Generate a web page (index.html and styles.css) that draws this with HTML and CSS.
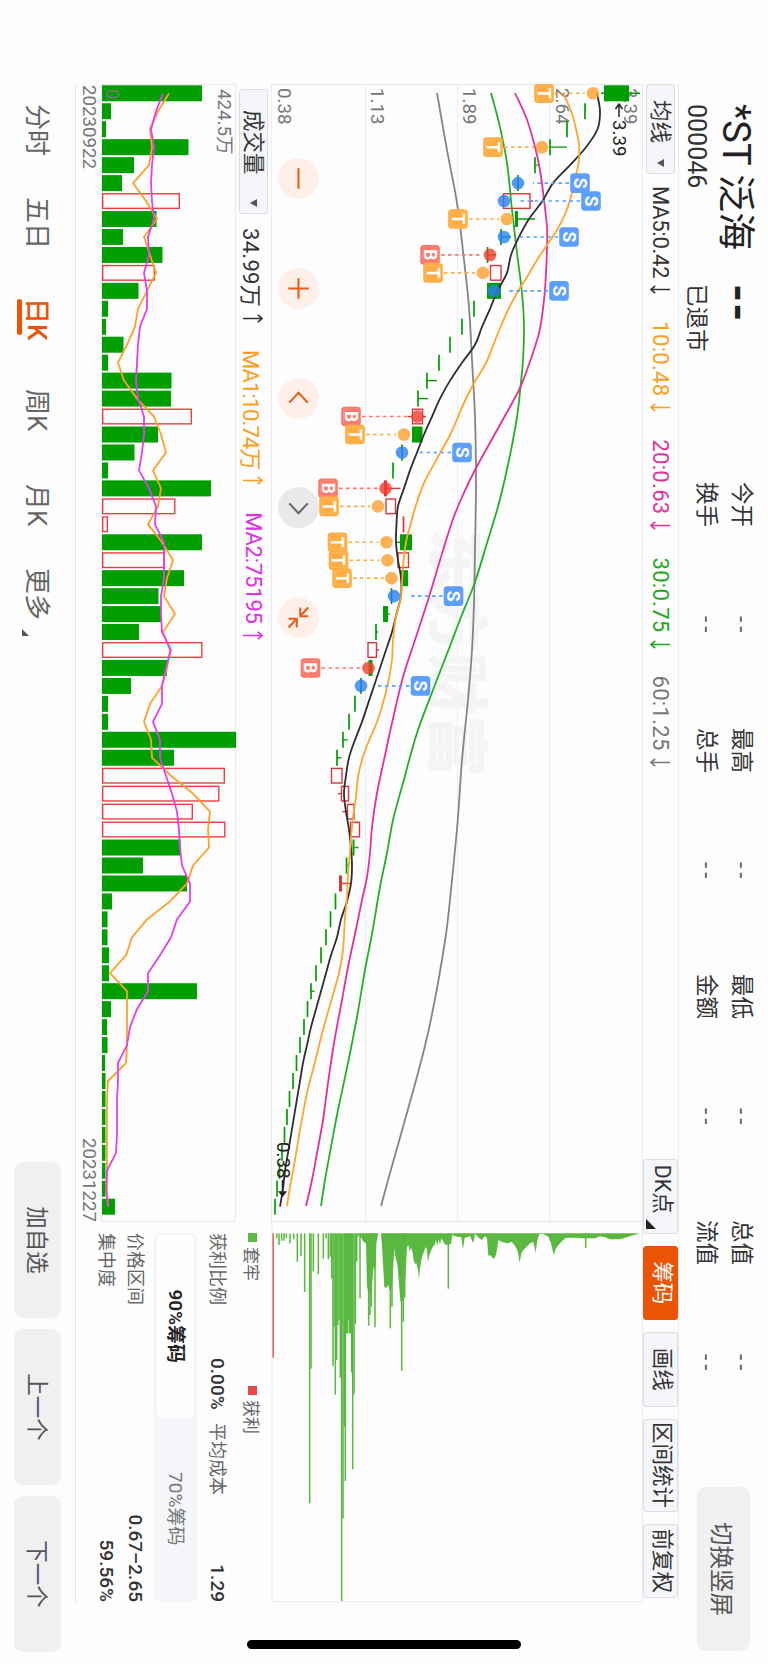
FILE: index.html
```html
<!DOCTYPE html>
<html lang="zh-CN">
<head>
  <meta charset="UTF-8">
  <meta name="viewport" content="width=device-width, initial-scale=1.0">
  <title>*ST泛海 000046</title>
  <link rel="stylesheet" href="styles.css">
</head>
<body>
  <svg class="defs" width="0" height="0">
    <symbol id="down" viewBox="0 0 9 20"><path d="M4.5 0V19M.8 14.8L4.5 19L8.2 14.8" fill="none" stroke="currentColor" stroke-width="1.6"/></symbol>
    <symbol id="up" viewBox="0 0 9 20"><path d="M4.5 20V1M.8 5.2L4.5 1L8.2 5.2" fill="none" stroke="currentColor" stroke-width="1.6"/></symbol>
  </svg>

  <div class="device">
  <div class="screen">
    <header class="header">
      <div class="stock">
        <div class="stock-name">*ST 泛海</div>
        <div class="stock-code">000046</div>
      </div>
      <div class="price">
        <div class="price-now">--</div>
        <div class="price-state">已退市</div>
      </div>
      <div class="quotes">
        <span>今开</span><i>--</i><span>最高</span><i>--</i><span>最低</span><i>--</i><span>总值</span><i>--</i>
        <span>换手</span><i>--</i><span>总手</span><i>--</i><span>金额</span><i>--</i><span>流值</span><i>--</i>
      </div>
      <button class="btn rotate-btn">切换竖屏</button>
    </header>

    <main class="main">
      <div class="toolbar">
        <button class="select">均线<b class="caret"></b></button>
        <div class="legend">
          <span class="black">MA5:0.42<svg class="arrow"><use href="#down"/></svg></span>
          <span class="orange">10:0.48<svg class="arrow"><use href="#down"/></svg></span>
          <span class="pink">20:0.63<svg class="arrow"><use href="#down"/></svg></span>
          <span class="green">30:0.75<svg class="arrow"><use href="#down"/></svg></span>
          <span class="gray">60:1.25<svg class="arrow"><use href="#down"/></svg></span>
        </div>
        <div class="tools">
          <button class="tool dk">DK点<b class="corner"></b></button>
          <button class="tool active">筹码</button>
          <button class="tool">画线</button>
          <button class="tool wide">区间统计</button>
          <button class="tool">前复权</button>
        </div>
      </div>

      <div class="charts">
        <div class="kline">
          <svg id="kline" width="1138" height="372" viewBox="0 0 1138 372"></svg>
          <div class="controls">
            <button class="round"><svg viewBox="-20 -20 40 40"><path d="M-10 0H10"/></svg></button>
            <button class="round"><svg viewBox="-20 -20 40 40"><path d="M-10 0H10M0 -10V10"/></svg></button>
            <button class="round"><svg viewBox="-20 -20 40 40"><path d="M4 -9L-5.5 0L4 9"/></svg></button>
            <button class="round off"><svg viewBox="-20 -20 40 40"><path d="M-4 -9L5.5 0L-4 9"/></svg></button>
            <button class="round"><svg viewBox="-20 -20 40 40"><path d="M-9.7 -1.7H-1.3V-9.5M-9.7 -9.5L-1.3 -1.7M9.7 1.7H1.3V9.7M9.7 9.7L1.3 1.7"/></svg></button>
          </div>
        </div>
        <svg id="chips" width="380" height="372" viewBox="0 0 1140 1116"></svg>
      </div>

      <div class="lower">
        <section class="volume">
          <div class="toolbar volume-bar">
            <button class="select volume-select">成交量<b class="caret"></b></button>
            <div class="legend">
              <span class="black">34.99万<svg class="arrow"><use href="#up"/></svg></span>
              <span class="orange">MA1:10.74万<svg class="arrow"><use href="#up"/></svg></span>
              <span class="magenta">MA2:75195<svg class="arrow"><use href="#up"/></svg></span>
            </div>
          </div>
          <svg id="volume" width="1138" height="135" viewBox="0 0 1138 135"></svg>
          <div class="dates"><span>20230922</span><span>20231227</span></div>
        </section>

        <section class="chip-info">
          <div class="chip-legend">
            <span><b class="dot-green"></b>套牢</span>
            <span><b class="dot-red"></b>获利</span>
          </div>
          <div class="info-row split">
            <span>获利比例</span><strong>0.00%</strong><span>平均成本</span><strong>1.29</strong>
          </div>
          <div class="segment">
            <button class="seg on">90%筹码</button>
            <button class="seg">70%筹码</button>
          </div>
          <div class="info-row"><span>价格区间</span><strong>0.67–2.65</strong></div>
          <div class="info-row"><span>集中度</span><strong>59.56%</strong></div>
        </section>
      </div>
    </main>

    <footer class="footer">
      <nav class="tabs">
        <a>分时</a>
        <a>五日</a>
        <a class="current">日K</a>
        <a>周K</a>
        <a>月K</a>
        <a>更多<b class="corner small"></b></a>
      </nav>
      <div class="actions">
        <button class="btn">加自选</button>
        <button class="btn">上一个</button>
        <button class="btn">下一个</button>
      </div>
    </footer>

    <div class="home-bar"></div>
  </div>
  </div>

  <script src="charts.js"></script>
</body>
</html>
```

FILE: styles.css
```css
* {
  box-sizing: border-box;
}

body {
  margin: 0;
  background: #fdfdfe;
  font-family: Roboto, "Noto Sans CJK SC", sans-serif;
  color: #333;
}

button {
  border: none;
  padding: 0;
  margin: 0;
  font-family: inherit;
  color: inherit;
  white-space: nowrap;
}

.defs {
  display: block;
}

.device {
  width: 768px;
  height: 1664px;
  overflow: hidden;
}

/* landscape screen on a portrait device */
.screen {
  position: relative;
  width: 1664px;
  height: 768px;
  display: flex;
  flex-direction: column;
  transform-origin: 0 0;
  transform: translateX(768px) rotate(90deg);
}

.header {
  height: 89px;
  display: flex;
  align-items: flex-start;
  padding-left: 104px;
}

.stock {
  width: 180px;
}

.stock-name {
  height: 53px;
  line-height: 65px;
  font-size: 38px;
  white-space: nowrap;
  color: #222;
}

.stock-code {
  height: 36px;
  line-height: 38px;
  font-size: 25px;
}

.price {
  width: 198px;
}

.price-now {
  height: 53px;
  line-height: 58px;
  font-size: 46px;
  font-weight: 700;
  letter-spacing: 1px;
  color: #222;
}

.price-state {
  height: 36px;
  line-height: 36px;
  font-size: 22.5px;
}

.quotes {
  display: grid;
  grid-template-columns: repeat(4, 134px 112px);
  grid-template-rows: 35px 35px;
  padding-top: 9px;
  font-size: 22.5px;
  line-height: 35px;
}

.quotes i {
  font-style: normal;
  letter-spacing: 4px;
  color: #555;
}

.btn {
  width: 156px;
  height: 47px;
  padding-bottom: 4px;
  border-radius: 9px;
  background: #f0f0f3;
  font-size: 22.5px;
  color: #555;
}

.btn,
.tool,
.seg,
.select {
  padding-top: 0;
}

.rotate-btn {
  width: 164px;
  height: 53px;
  margin-top: 18px;
  margin-left: 21px;
  padding-bottom: 0;
  font-size: 23.5px;
}

.main {
  width: 1518px;
  height: 604px;
  margin-left: 84px;
  border-top: 1px solid #ebebf0;
  border-bottom: 1px solid #e4e4ea;
}

.toolbar {
  height: 35px;
  display: flex;
  align-items: center;
}

.select {
  width: 90px;
  height: 29px;
  padding: 0 6px 0 15px;
  display: flex;
  align-items: center;
  justify-content: space-between;
  border: 1px solid #dcdce2;
  border-radius: 3px;
  background: #f5f6f9;
  font-size: 21.5px;
  line-height: 24px;
}

.caret {
  border-left: 4px solid transparent;
  border-right: 4px solid transparent;
  border-top: 7px solid #555;
}

.legend {
  display: flex;
  gap: 27px;
  margin-left: 12px;
  font-size: 22px;
  letter-spacing: 0.3px;
}

.legend span {
  display: flex;
  align-items: center;
  gap: 7px;
}

.legend .black {
  letter-spacing: -0.25px;
}

.volume-bar .black {
  letter-spacing: 0.3px;
}

.volume-bar .orange {
  letter-spacing: -0.95px;
}

.volume-bar .magenta {
  letter-spacing: -0.2px;
}

.arrow {
  width: 9px;
  height: 20px;
}

.black { color: #333; }
.orange { color: #fd9d20; }
.pink { color: #e3319c; }
.green { color: #21a821; }
.gray { color: #777; }
.magenta { color: #dc32e4; }

.tools {
  display: flex;
  gap: 12px;
  margin-left: auto;
  margin-right: 4px;
}

.tool {
  position: relative;
  width: 74.5px;
  height: 35px;
  padding-bottom: 4px;
  border: 1px solid #dcdce2;
  border-radius: 3px;
  background: #f5f6f9;
  font-size: 21.5px;
  line-height: 24px;
}

.tool.wide {
  width: 93px;
}

.tool.dk {
  padding-right: 14px;
}

.tool.active {
  background: #ea5404;
  border-color: #ea5404;
  color: #fff;
}

.corner {
  position: absolute;
  right: 4px;
  bottom: 2px;
  border-left: 10px solid transparent;
  border-bottom: 10px solid #222;
}

.corner.small {
  right: -16px;
  bottom: 9px;
  border-left-width: 7px;
  border-bottom: 7px solid #555;
}

.charts {
  display: flex;
  height: 372px;
}

.charts svg {
  display: block;
}

.kline {
  position: relative;
  width: 1138px;
}

.controls {
  position: absolute;
  left: 74px;
  bottom: 7px;
  display: flex;
  gap: 68.8px;
}

.round {
  width: 41px;
  height: 41px;
  border-radius: 50%;
  background: #fef0e9;
}

.round svg {
  width: 41px;
  height: 41px;
  fill: none;
  stroke: #ea5b14;
  stroke-width: 2;
}

.round.off {
  background: #e9e9e9;
}

.round.off svg {
  stroke: #666;
}

.lower {
  display: flex;
}

.volume {
  width: 1138px;
}

.volume svg {
  display: block;
}

.volume-bar {
  padding-left: 5px;
}

.volume-select {
  width: 125px;
  padding-left: 20px;
}

.volume-bar .legend {
  margin-left: 14px;
}

.dates {
  display: flex;
  justify-content: space-between;
  height: 25px;
  line-height: 24px;
  padding-left: 1px;
  font-size: 18.7px;
  color: #777;
}

.chip-info {
  width: 369px;
  margin-left: 11px;
  padding-top: 6px;
  font-size: 18px;
}

.chip-legend {
  display: grid;
  grid-template-columns: 153px 1fr;
  height: 25px;
  font-size: 17px;
  color: #666;
}

.chip-legend span {
  display: flex;
  align-items: center;
  gap: 5px;
}

.chip-legend b {
  width: 9px;
  height: 9px;
}

.dot-green { background: #5cb840; }
.dot-red { background: #e84a4a; }

.info-row {
  display: flex;
  justify-content: space-between;
  height: 28.5px;
  line-height: 28px;
  color: #666;
}

.info-row strong {
  font-weight: 500;
  font-size: 19px;
  color: #333;
}

.info-row.split {
  display: grid;
  grid-template-columns: 125px 65px 1fr auto;
  height: 43px;
  line-height: 46px;
}

.segment {
  display: flex;
  height: 43px;
  margin-bottom: 5px;
  padding: 3px 2px;
  border-radius: 6px;
  background: #f5f6f9;
}

.seg {
  flex: 1;
  padding-bottom: 4px;
  border-radius: 5px;
  background: none;
  font-size: 19px;
  color: #777;
}

.seg.on {
  background: #fefefe;
  font-weight: 600;
  color: #222;
}

.footer {
  height: 75px;
  display: flex;
  align-items: flex-start;
  padding-left: 104px;
}

.tabs {
  display: grid;
  grid-template-columns: 93px 101px 91px 95px 84px 90px;
  margin-top: 14px;
  font-size: 26px;
  line-height: 48px;
  color: #666;
}

.tabs a {
  position: relative;
  justify-self: start;
  height: 48px;
}

.tabs .current {
  color: #ea5404;
  font-weight: 500;
}

.tabs .current::after {
  content: "";
  position: absolute;
  left: 1px;
  bottom: 4px;
  width: 36px;
  height: 5px;
  border-radius: 3px;
  background: #ea5404;
}

.actions {
  display: flex;
  gap: 11px;
  margin-top: 14px;
  margin-left: 504px;
}

.home-bar {
  position: absolute;
  left: 1640px;
  top: 247px;
  width: 9px;
  height: 274px;
  border-radius: 5px;
  background: #000;
}
```

FILE: charts.js
```js
const STEP = 17.958;
const FIRST = 9.3;
const UP = "#d9363c";
const DOWN = "#009e00";

const cx = i => FIRST + i * STEP;
const line = (x1, y1, x2, y2, c, w = 1) =>
  `<line x1="${x1}" y1="${y1}" x2="${x2}" y2="${y2}" stroke="${c}" stroke-width="${w}"/>`;
const rect = (x, y, w, h, c) => `<rect x="${x}" y="${y}" width="${w}" height="${h}" fill="${c}"/>`;
const hollow = (x, y, w, h, c) =>
  `<rect x="${x}" y="${y}" width="${w}" height="${h}" fill="none" stroke="${c}" stroke-width="1.4"/>`;
const text = (x, y, s, size, c, extra = "") =>
  `<text x="${x}" y="${y}" font-size="${size}" fill="${c}" ${extra}>${s}</text>`;

// smooth curve through the points
function curve(p, color) {
  let d = `M${p[0]}`;
  for (let i = 0; i < p.length - 1; i++) {
    const a = p[i - 1] || p[i], b = p[i], c = p[i + 1], e = p[i + 2] || c;
    d += `C${b[0] + (c[0] - a[0]) / 6},${b[1] + (c[1] - a[1]) / 6} ${c[0] - (e[0] - b[0]) / 6},${c[1] - (e[1] - b[1]) / 6} ${c}`;
  }
  return `<path d="${d}" fill="none" stroke="${color}" stroke-width="1.8"/>`;
}

// [high, body top, body bottom, low, type]  g: down, r: up hollow, f: up filled
const candles = [
  [3, 14, 39, 42, "g"], [58, 58, 58, 58, "g"], [76, 76, 76, 76, "g"], [76, 93, 93, 93, "g"],
  [105, 108, 108, 108, "g"], [125, 125, 125, 125, "g"], [110, 113, 139.5, 139.5, "r"], [108, 125, 128, 128, "g"],
  [132, 142, 142, 142, "g"], [147, 155.5, 155.5, 155.5, "g"], [142, 142, 152.5, 152.5, "r"], [142, 142, 156, 156, "g"],
  [169, 169, 169, 169, "g"], [181, 181, 181, 181, "g"], [193, 193, 193, 193, "g"], [204, 204, 204, 204, "g"],
  [206, 216, 216, 216, "g"], [215, 225, 225, 225, "g"], [217, 220.5, 230.5, 235, "r"], [220.5, 220.5, 231, 231, "g"],
  [241, 241, 241, 241, "g"], [250, 250, 250, 250, "g"], [242.5, 256, 259, 259, "f"], [247.5, 247.5, 257, 257, "r"],
  [239.5, 239.5, 239.5, 239.5, "f"], [231, 231, 243, 247, "g"], [234.5, 234.5, 245, 245, "r"], [235, 235, 242, 242, "g"],
  [251.5, 251.5, 251.5, 251.5, "g"], [253, 255, 260, 260, "g"], [265, 267, 267, 267, "g"], [264, 266.5, 275, 275, "r"],
  [270.5, 270.5, 274.5, 274.5, "g"], [282, 282, 282, 282, "g"], [288, 288, 288, 288, "g"], [294, 294, 294, 294, "g"],
  [295.5, 300, 300, 300, "g"], [301.5, 306, 306, 306, "g"], [301, 301, 311.5, 311.5, "r"], [294.5, 294.5, 301.5, 305, "r"],
  [289, 289, 295.5, 300.5, "r"], [283.5, 283.5, 292.5, 292.5, "r"], [284.5, 288.5, 290.5, 290.5, "g"], [294, 296.5, 296.5, 296.5, "g"],
  [293, 301, 304, 304, "f"], [307.5, 307.5, 307.5, 307.5, "g"], [312.5, 312.5, 312.5, 312.5, "g"], [317, 317, 317, 317, "g"],
  [322, 322, 322, 322, "g"], [327, 327, 327, 327, "g"], [328.5, 332, 332, 332, "g"], [335.5, 335.5, 335.5, 335.5, "g"],
  [339, 339, 339, 339, "g"], [343, 343, 343, 343, "g"], [346.5, 346.5, 346.5, 346.5, "g"], [350, 350, 350, 350, "g"],
  [353.5, 353.5, 353.5, 353.5, "g"], [356, 356, 356, 356, "g"], [358.5, 358.5, 358.5, 358.5, "g"], [361, 361, 361, 361, "g"],
  [363.5, 363.5, 363.5, 363.5, "g"], [366, 366, 366, 366, "g"], [368, 368, 368, 368, "g"]
];

const ma5 = [46, 43, 45.5, 57, 73, 90, 100.5, 114, 124, 132, 136, 145.5, 153, 161, 168, 181, 193, 203, 211, 219, 226,
  233, 239, 245, 246.5, 247, 245, 242, 242, 246.5, 251, 257, 263, 269, 275, 281, 288, 294, 297, 299, 297, 294, 292,
  291, 292, 296, 302, 306, 312, 317, 322, 327, 332, 336, 340, 343, 346, 349, 352, 355, 358, 360, 363];

const ma10 = [[9, 80], [27, 72], [45, 67], [61, 64], [76, 64], [91, 67], [109, 71], [128, 77], [146, 86], [161, 96],
  [176, 106], [193, 116], [209, 126], [226, 135], [249, 145], [279, 157], [299, 169], [319, 179], [349, 192],
  [371, 204], [399, 219], [421, 227], [439, 232], [458, 237], [483, 240], [513, 242], [533, 247], [556, 250],
  [576, 251], [599, 255], [619, 260], [638, 266], [659, 275], [676, 281], [693, 285], [713, 287], [733, 290],
  [753, 292], [769, 293], [789, 295], [813, 296], [833, 298], [866, 300], [889, 304], [914, 311], [946, 320],
  [978, 328], [1009, 336], [1046, 343], [1076, 348], [1103, 353], [1122, 356]];

const ma20 = [[9, 128], [33, 117], [59, 109], [86, 103], [116, 99], [143, 96], [163, 96], [189, 97], [216, 99],
  [249, 104], [286, 116], [306, 124], [339, 142], [384, 167], [413, 181], [438, 191], [473, 202], [513, 214],
  [556, 228], [593, 240], [639, 251], [676, 259], [709, 266], [743, 271], [769, 273], [793, 276], [816, 281],
  [850, 288], [883, 295], [916, 301], [959, 309], [999, 315], [1036, 320], [1069, 326], [1096, 331], [1122, 337]];

const ma30 = [[9, 152], [39, 144], [79, 136], [126, 131], [169, 126], [209, 121], [243, 119], [276, 120], [298, 122],
  [333, 126], [376, 134], [419, 144], [459, 156], [498, 168], [533, 182], [562, 193], [606, 210], [649, 226],
  [699, 240], [736, 250], [769, 256], [803, 263], [850, 271], [886, 278], [933, 286], [979, 295], [1026, 305],
  [1063, 312], [1096, 318], [1122, 322]];

const ma60 = [[9, 206], [66, 196], [119, 186], [176, 179], [223, 174], [276, 171], [333, 168], [399, 167], [466, 168],
  [519, 169], [566, 171], [616, 175], [676, 181], [733, 185], [776, 189], [816, 193], [850, 197], [899, 205],
  [949, 215], [989, 225], [1043, 240], [1089, 253], [1122, 262]];

// [candle index, badge y, dot y, letter]
const marks = [
  [0, 99, 50, "T"], [3, 150, 101, "T"], [5, 63, 125, "S"], [6, 52, 139, "S"], [7, 185, 136, "T"], [8, 74, 139, "S"],
  [9, 213, 153, "B"], [10, 210, 160, "T"], [11, 84, 149, "S"], [18, 292, 225.5, "B"], [19, 288, 239, "T"],
  [20, 181, 241, "S"], [22, 315, 257.5, "B"], [23, 314, 265, "T"], [25, 305.5, 256.5, "T"], [26, 304.5, 255.5, "T"],
  [27, 301, 251.5, "T"], [28, 189.5, 249, "S"], [32, 332.5, 274.5, "B"], [33, 222.5, 282, "S"]
];
const markColor = { T: "#ffad42", S: "#5c9fff", B: "#ff7769" };
const dotColor = { T: "#ff9f2a", S: "#2a7ff5", B: "#f43d30" };

function drawKline() {
  let s = "";
  for (const y of [0.5, 93.5, 185.5, 277.5, 371.5]) s += line(0, y, 1138, y, "#ececf4");
  s += line(0.5, 0, 0.5, 372, "#e6e6ee") + line(1137.5, 0, 1137.5, 372, "#e6e6ee");
  s += text(445, 209, "东方财富", 62, "#f4f4f6", 'font-weight="900"');

  [["3.39", 13], ["2.64", 81], ["1.89", 173.5], ["1.13", 266], ["0.38", 359]].forEach(([t, y]) => {
    s += text(4, y + 6.5, t, 18.7, "#777");
  });

  candles.forEach(([hi, top, bottom, lo, type], i) => {
    const x = cx(i), c = type === "g" ? DOWN : UP;
    if (hi < top) s += line(x, hi, x, top, c, 1.4);
    if (lo > bottom) s += line(x, bottom, x, lo, c, 1.4);
    if (top === bottom) s += line(x - 8, top, x + 8, top, c, 1.7);
    else if (type === "r") s += hollow(x - 7.3, top, 14.6, bottom - top, c);
    else s += rect(x - 8, top, 16, bottom - top, c);
  });

  s += curve(ma60, "#858585") + curve(ma30, "#27ae27") + curve(ma20, "#e3319c");
  s += curve(ma5.map((y, i) => [cx(i), y]), "#2e2e2e") + curve(ma10, "#ffa52e");

  marks.forEach(([i, by, dy, t]) => {
    const x = cx(i), dir = by < dy ? -1 : 1;
    s += `<line x1="${x}" y1="${by - dir * 11}" x2="${x}" y2="${dy + dir * (t === "S" ? 15 : 8)}" stroke="${markColor[t]}" stroke-width="1.6" stroke-dasharray="3.5 3.5"/>`;
    s += `<circle cx="${x}" cy="${dy}" r="6.3" fill="${dotColor[t]}" opacity=".8"/>`;
    s += `<rect x="${x - 9.8}" y="${by - 9.8}" width="19.6" height="19.6" rx="3.5" fill="${markColor[t]}"/>`;
    if (t !== "S") s += `<rect x="${x - 7.4}" y="${by - 7.4}" width="14.8" height="14.8" rx="1.5" fill="none" stroke="#fff" stroke-opacity=".15"/>`;
    s += text(x, by + 6.3, t, 17.5, "#fff", 'font-weight="700" text-anchor="middle"');
  });

  s += text(36, 30.5, "3.39", 18.7, "#222");
  s += `<path d="M33 24H20M25 20.5L20 24L25 27.5" fill="none" stroke="#222" stroke-width="1.5"/>`;
  s += text(1058, 366.5, "0.38", 18.7, "#222");
  s += `<path d="M1096 360.5H1112M1108 357.5L1112 360.5L1108 363.5Z" fill="#222" stroke="#222" stroke-width="1.5"/>`;
  document.getElementById("kline").innerHTML = s;
}

const volumes = [100, 9, 4, 86.5, 32, 20, 78, 54.5, 21, 60.5, 53, 36.5, 6, 4, 21.5, 6, 69.5, 69, 90, 56, 32.5, 6, 109,
  73.5, 6, 100, 63, 82, 56.5, 59, 37, 100.5, 65, 29, 6, 6, 134, 72, 123, 117.5, 91, 123.5, 78.5, 41, 85, 10, 5.5, 5.5,
  7, 7, 95, 9, 5, 5.5, 3, 3.5, 3.5, 3.5, 3.5, 3.5, 3.5, 3.5, 13];
const redVolumes = [6, 10, 18, 23, 24, 26, 31, 38, 39, 40, 41];

const volMa1 = [67, 56, 48, 50, 47, 31, 44, 55, 42, 48, 54, 45, 36, 33, 25, 16, 22, 35, 52, 59, 64, 51, 59, 56, 46, 60,
  71, 65, 62, 73, 61, 68, 65, 60, 48, 42, 49, 50, 69, 91, 108, 106, 107, 91, 85, 68, 45, 30, 24, 8, 25, 25, 25, 25, 24,
  6, 5, 5, 5, 5, 5, 5, 6];
const volMa2 = [61, 54, 49, 52, 50, 49, 50, 52, 46, 47, 42, 45, 45, 38, 36, 35, 34, 36, 42, 42, 40, 37, 47, 54, 53, 62,
  62, 62, 59, 59, 60, 69, 64, 60, 60, 51, 58, 58, 64, 70, 75, 77, 78, 80, 88, 88, 75, 69, 58, 46, 46, 35, 28, 25, 16,
  16, 15, 15, 15, 14, 5, 4, 6];

function drawVolume() {
  const base = 134;
  const poly = (a, c) =>
    `<polyline points="${a.map((v, i) => `${cx(i)},${base - v}`).join(" ")}" fill="none" stroke="${c}" stroke-width="1.8"/>`;
  let s = `<rect x=".5" y=".5" width="1137" height="134" fill="none" stroke="#e9e9ef"/>`;
  volumes.forEach((v, i) => {
    s += redVolumes.includes(i)
      ? hollow(cx(i) - 7.3, base - v + 0.7, 14.6, v - 1.4, "#ea4043")
      : rect(cx(i) - 8, base - v, 16, v, DOWN);
  });
  s += text(5, 18, "424.5万", 18.7, "#777") + text(5, 130, "0", 18.7, "#777");
  s += poly(volMa1, "#ff9f2a") + poly(volMa2, "#e040ee");
  document.getElementById("volume").innerHTML = s;
}

// chip distribution at 3x: [price position, length]
const spikes = [[50, 15], [57, 35], [65, 22], [72, 22], [79, 15], [90, 30], [101, 18], [112, 85], [123, 68], [134, 176],
  [149, 810], [153, 406], [160, 113], [175, 123], [190, 76], [198, 15], [205, 78], [211, 70], [215, 135], [219, 398],
  [222, 280], [226, 484], [230, 380], [234, 275], [237, 260], [241, 433], [245, 1103], [249, 855], [253, 580],
  [256, 743], [260, 300], [263, 300], [266, 260], [269, 300], [272, 300], [275, 417], [278, 708], [282, 484],
  [286, 272], [290, 85], [294, 10], [300, 195], [326, 277], [330, 245], [334, 220], [345, 282], [391, 285], [396, 220],
  [425, 412], [430, 265], [434, 192], [565, 166], [977, 44]];
const area = [[296, 0], [303, 12], [310, 25], [318, 30], [321, 160], [326, 180], [334, 180], [338, 130], [341, 100],
  [347, 110], [349, 30], [355, 0], [363, 0], [366, 40], [369, 90], [373, 160], [377, 165], [381, 160], [385, 155],
  [388, 170], [396, 160], [400, 95], [403, 45], [406, 70], [409, 80], [413, 100], [417, 150], [421, 205], [432, 200],
  [437, 120], [441, 40], [445, 35], [449, 55], [453, 42], [457, 55], [461, 80], [465, 92], [469, 90], [473, 105],
  [477, 135], [480, 105], [484, 80], [488, 65], [492, 55], [496, 42], [500, 45], [504, 87], [508, 65], [512, 55],
  [516, 45], [520, 38], [524, 35], [528, 20], [532, 38], [536, 18], [540, 35], [544, 15], [550, 25], [557, 35],
  [573, 32], [577, 5], [590, 10], [604, 12], [609, 48], [614, 14], [630, 8], [640, 30], [645, 2], [655, 12], [665, 20],
  [675, 8], [681, 15], [685, 68], [690, 65], [695, 70], [701, 77], [706, 70], [711, 50], [715, 20], [725, 25],
  [735, 28], [745, 30], [755, 25], [765, 38], [773, 52], [779, 88], [784, 60], [790, 50], [800, 40], [810, 30],
  [820, 25], [827, 58], [832, 20], [838, 2], [850, 2], [865, 10], [873, 30], [881, 65], [888, 45], [900, 30],
  [915, 15], [930, 13], [950, 13], [970, 15], [990, 15], [1005, 15], [1020, 9], [1035, 12], [1050, 18], [1080, 18],
  [1100, 12], [1120, 6], [1140, 0]];

function drawChips() {
  const left = 34, base = 1149, green = "#5ab840";
  let s = `<path d="M0 2H1139V1113H0" fill="none" stroke="#e9e9ef" stroke-width="3"/>`;
  spikes.forEach(([p, len]) => { s += rect(left, base - p - 2.3, len, 4.6, green); });
  s += `<path d="M${left} ${base - 296}${area.map(([p, len]) => `L${left + len} ${base - p}`).join("")}L${left} ${base - 1140}Z" fill="${green}"/>`;
  s += rect(left, base - 42, 373, 5, "#e4686c");
  document.getElementById("chips").innerHTML = s;
}

drawKline();
drawVolume();
drawChips();
```
